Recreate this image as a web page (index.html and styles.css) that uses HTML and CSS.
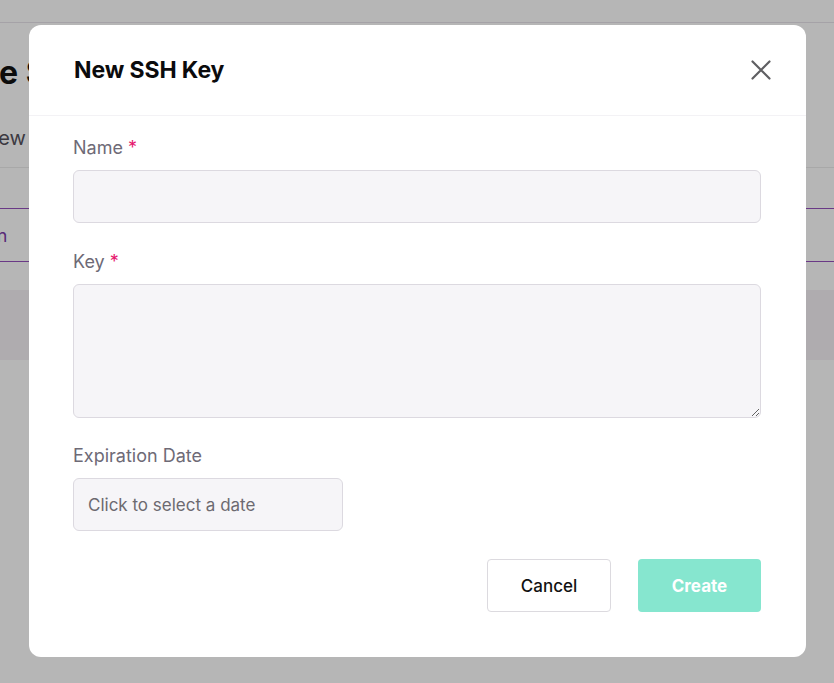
FILE: index.html
```html
<!DOCTYPE html>
<html lang="en">
<head>
<meta charset="utf-8">
<title>New SSH Key</title>
<link rel="stylesheet" href="styles.css">
</head>
<body>
<div class="page">
  <div class="topbar"></div>
  <div class="content">
    <h1 class="page-title">Manage SSH Keys</h1>
    <div class="subrow">Preview</div>
    <div class="tabs"><span class="tab">Main</span></div>
    <div class="table-head"></div>
  </div>
</div>
<div class="overlay">
  <div class="modal" role="dialog" aria-labelledby="mtitle">
    <div class="modal-header">
      <h2 id="mtitle" class="modal-title">New SSH Key</h2>
      <button class="close" aria-label="Close">
        <svg width="20" height="20" viewBox="0 0 20 20"><path d="M1.5 1.5 L18.5 18.5 M18.5 1.5 L1.5 18.5" stroke="#5f5f62" stroke-width="2.2" stroke-linecap="round" fill="none"/></svg>
      </button>
    </div>
    <div class="modal-body">
      <div class="field">
        <label class="label">Name <span class="req">*</span></label>
        <input class="input" type="text">
      </div>
      <div class="field">
        <label class="label">Key <span class="req">*</span></label>
        <textarea class="input textarea"></textarea>
      </div>
      <div class="field last">
        <label class="label">Expiration Date</label>
        <input class="input date" type="text" placeholder="Click to select a date">
      </div>
      <div class="footer">
        <button class="btn btn-cancel">Cancel</button>
        <button class="btn btn-create">Create</button>
      </div>
    </div>
  </div>
</div>
</body>
</html>
```
FILE: styles.css
```css
* { box-sizing: border-box; }
html, body { margin: 0; padding: 0; }
body {
  width: 834px;
  height: 683px;
  overflow: hidden;
  background: #ffffff;
  font-family: "Inter", "Liberation Sans", sans-serif;
  position: relative;
}
.page { width: 834px; }
.topbar {
  height: 23px;
  background: #ffffff;
  border-bottom: 1px solid #e7e4ea;
}
.content {
  margin-left: -108px;
}
.page-title {
  margin: 0;
  padding-top: 30px;
  height: 100px;
  font-size: 32px;
  font-weight: 700;
  color: #111;
  white-space: nowrap;
}
.subrow {
  height: 45px;
  font-size: 20px;
  color: #55525c;
  border-bottom: 1px solid #ececec;
  line-height: 30px;
  padding-left: 59px;
  white-space: nowrap;
}
.tabs {
  margin-top: 40px;
  height: 54px;
  border-top: 1px solid #9551bc;
  border-bottom: 1px solid #9551bc;
  display: flex;
  align-items: center;
}
.tab { font-size: 18px; color: #7c3aa8; padding-left: 74px; }
.table-head {
  margin-top: 28px;
  height: 70px;
  background: #f5f2f6;
}
.overlay {
  position: absolute;
  inset: 0;
  background: rgba(0, 0, 0, 0.286);
  padding: 25px 28px 0 29px;
}
.modal {
  width: 777px;
  height: 632px;
  background: #fff;
  border-radius: 12px;
  display: flex;
  flex-direction: column;
}
.modal-header {
  height: 91px;
  border-bottom: 1px solid #f3f2f5;
  display: flex;
  align-items: center;
  justify-content: space-between;
  padding: 0 35px 0 45px;
}
.modal-title {
  margin: 0;
  font-size: 23px;
  font-weight: 700;
  color: #0b0b0d;
  letter-spacing: -0.1px;
}
.close {
  border: 0;
  background: none;
  padding: 0;
  width: 20px;
  height: 20px;
  display: flex;
}
.modal-body {
  padding: 20px 45px 45px 44px;
}
.field { margin-bottom: 26.5px; display: flex; flex-direction: column; }
.field.last { margin-bottom: 28px; }
.label {
  font-size: 18px;
  line-height: 24px;
  color: #6e6a76;
  margin-bottom: 10px;
}
.req { color: #e6186e; }
.input {
  display: block;
  width: 688px;
  height: 53px;
  background: #f6f5f8;
  border: 1px solid #dcd9e0;
  border-radius: 6px;
  font-family: inherit;
  font-size: 17px;
  padding: 0 14px;
  outline: none;
}
.textarea {
  height: 134px;
  resize: vertical;
  padding: 12px 14px;
}
.date { width: 270px; color: #6c6a70; }
.date::placeholder { color: #6c6a70; opacity: 1; }
.footer {
  display: flex;
  justify-content: flex-end;
  gap: 27px;
}
.btn {
  height: 53px;
  border-radius: 4px;
  font-family: inherit;
  font-size: 17px;
  cursor: pointer;
}
.btn-cancel {
  width: 124px;
  background: #fff;
  border: 1px solid #dcdadf;
  color: #111;
  font-weight: 500;
}
.btn-create {
  width: 123px;
  background: #86e6cf;
  border: 0;
  color: #fff;
  font-weight: 700;
}
```
